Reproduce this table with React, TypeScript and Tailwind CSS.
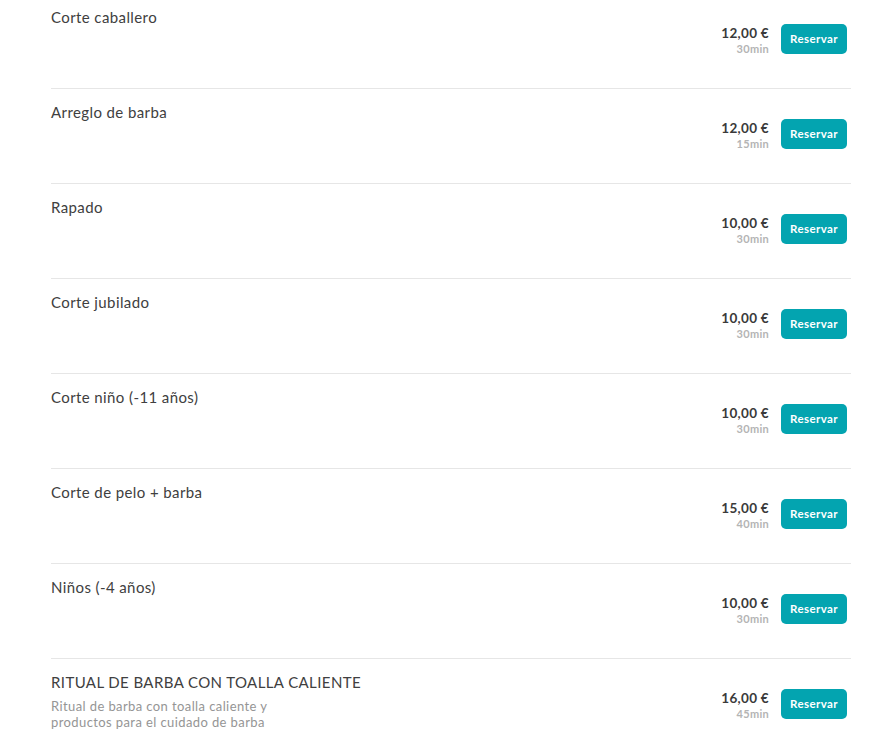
import React from "react";

type Service = { name: string; price: string; dur: string; desc?: string };

const services: Service[] = [
  { name: "Corte caballero", price: "12,00 €", dur: "30min" },
  { name: "Arreglo de barba", price: "12,00 €", dur: "15min" },
  { name: "Rapado", price: "10,00 €", dur: "30min" },
  { name: "Corte jubilado", price: "10,00 €", dur: "30min" },
  { name: "Corte niño (-11 años)", price: "10,00 €", dur: "30min" },
  { name: "Corte de pelo + barba", price: "15,00 €", dur: "40min" },
  { name: "Niños (-4 años)", price: "10,00 €", dur: "30min" },
  {
    name: "RITUAL DE BARBA CON TOALLA CALIENTE",
    price: "16,00 €",
    dur: "45min",
    desc: "Ritual de barba con toalla caliente y productos para el cuidado de barba",
  },
];

export default function App() {
  return (
    <div
      className="w-[883px] h-[734px] overflow-hidden bg-white"
      style={{ fontFamily: "Lato, 'Open Sans', sans-serif" }}
    >
      <div className="ml-[51px] w-[800px] -mt-[6px]">
        {services.map((s, i) => (
          <div
            key={i}
            className={`flex justify-between h-[95px] ${
              i < services.length - 1 ? "border-b border-[#e6e6e6]" : ""
            }`}
          >
            <div className="pt-[13px]">
              <div className="text-[15px] leading-[20px] tracking-[0.4px] text-[#404040]">{s.name}</div>
              {s.desc && (
                <div className="mt-[6px] w-[240px] text-[13px] leading-[16px] tracking-[0.4px] text-[#959595]">
                  {s.desc}
                </div>
              )}
            </div>
            <div className="flex items-start pt-[30px] pr-[4px] gap-[12px]">
              <div className="flex flex-col items-end pt-[1px]">
                <div className="text-[13.5px] leading-[16px] font-bold tracking-[0.3px] text-[#3a3a3a]">{s.price}</div>
                <div className="text-[11px] leading-[14px] font-bold tracking-[0.3px] text-[#b4b4b4] mt-[1px]">{s.dur}</div>
              </div>
              <button className="w-[66px] h-[30px] rounded-[5px] bg-[#03a4b0] text-white text-[11.5px] font-bold tracking-[0.4px]">
                Reservar
              </button>
            </div>
          </div>
        ))}
      </div>
    </div>
  );
}
